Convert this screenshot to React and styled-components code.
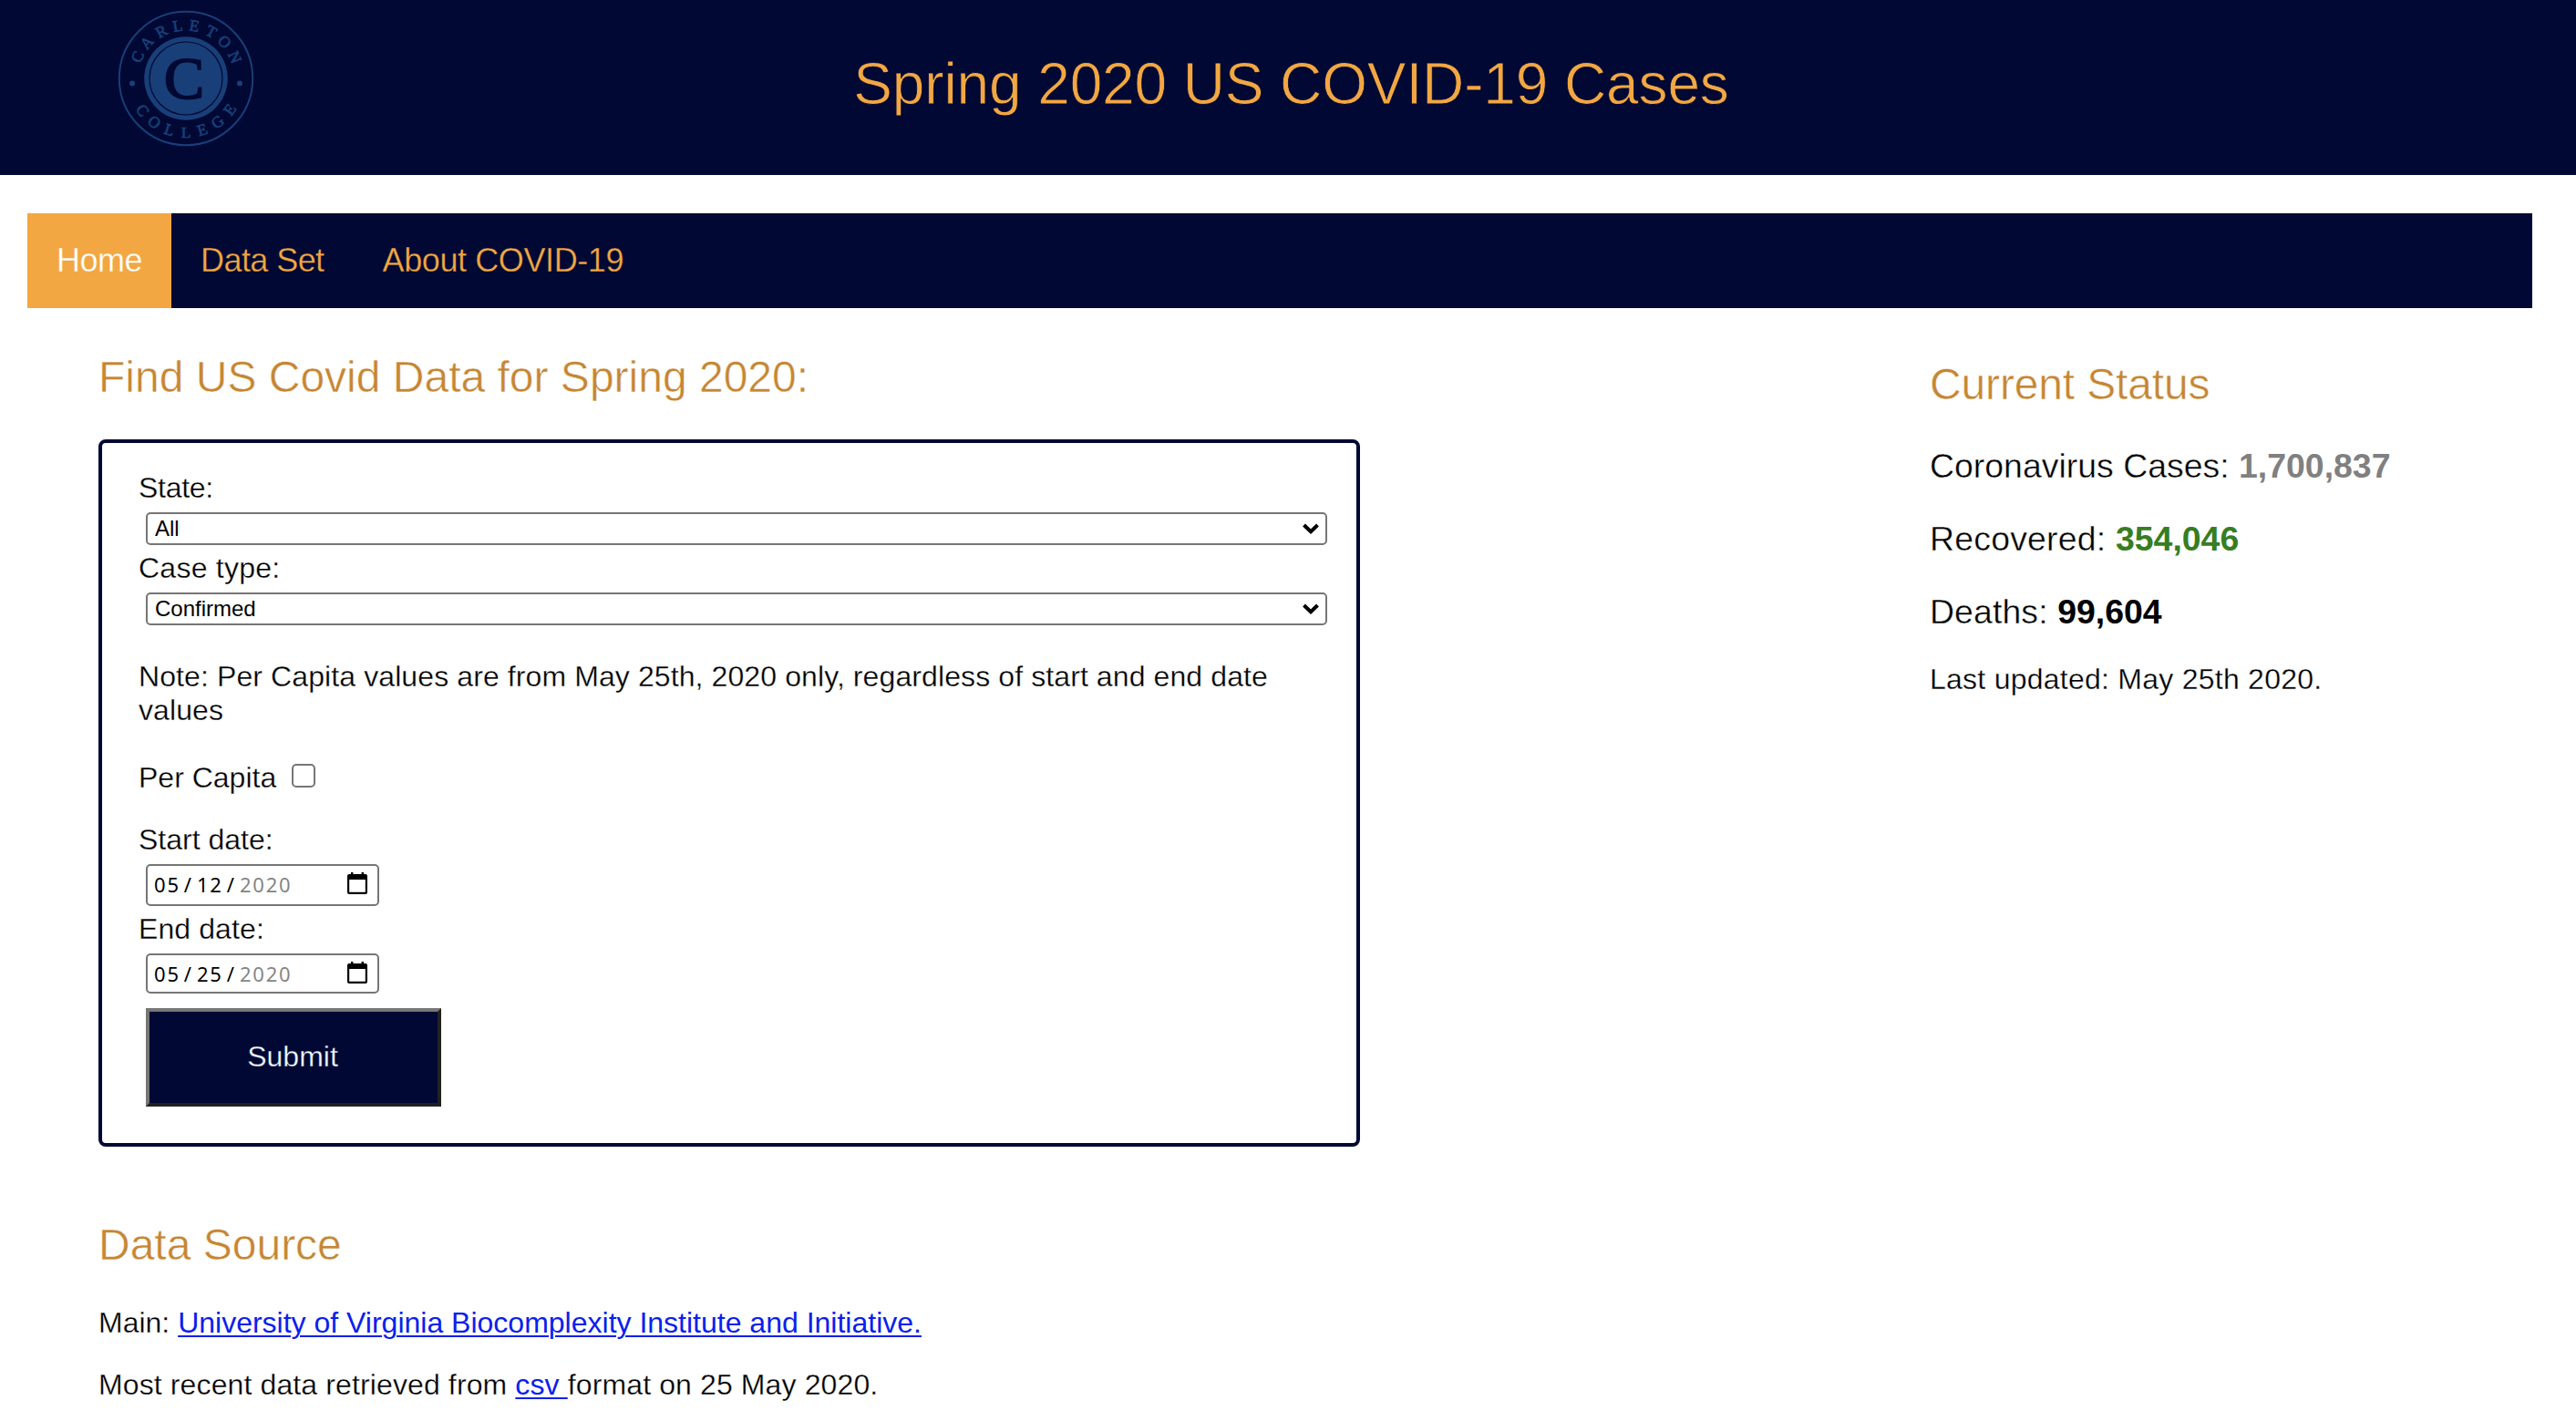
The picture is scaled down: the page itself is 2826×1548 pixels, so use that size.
import React from "react";
import styled, { createGlobalStyle, css } from "styled-components";

const navy = "#000833";
const orange = "#f2a742";
const sans = `"Liberation Sans", Arial, Helvetica, sans-serif`;

/* Slims the regular weight down to a light one on a flat background. */
const light = (background, amount = 0.3) => css`
  -webkit-text-stroke: ${amount}px ${background};
`;

const GlobalStyle = createGlobalStyle`
  *, *::before, *::after { box-sizing: border-box; }
  html, body { margin: 0; padding: 0; background: #fff; }
  body { font-family: ${sans}; color: #000; overflow: hidden; }
`;

const Page = styled.div`
  height: 1548px;
  overflow: hidden;
  display: flex;
  flex-direction: column;
`;

const Header = styled.header`
  height: 192px;
  flex: none;
  background: ${navy};
  display: grid;
  grid-template-columns: 408px 1fr 401px;
`;

const LogoSvg = styled.svg`
  width: 152px;
  height: 152px;
  margin: 10px 0 0 128px;
  font-family: "Liberation Serif", "Times New Roman", serif;
`;

const Title = styled.h1`
  margin: 0;
  padding-top: 52px;
  text-align: center;
  font-size: 64px;
  line-height: 80px;
  font-weight: 400;
  letter-spacing: -0.12px;
  color: ${orange};
  ${light(navy, 0.8)}
`;

const Nav = styled.nav`
  display: flex;
  flex: none;
  height: 104px;
  margin: 42px 48px 0 30px;
  background: ${navy};
`;

const NavItem = styled.a`
  padding: 0 32px;
  font-size: 36px;
  line-height: 103px;
  letter-spacing: ${(p) => p.$spacing}px;
  text-decoration: none;
  color: ${(p) => (p.$active ? "#fff" : orange)};
  background: ${(p) => (p.$active ? orange : navy)};
  ${(p) => light(p.$active ? orange : navy)}
`;

const Columns = styled.main`
  display: grid;
  grid-template-columns: 1384px 1fr;
  column-gap: 625px;
  padding-left: 108px;
`;

const Heading = styled.h2`
  margin: 0;
  font-size: 48px;
  line-height: 57px;
  font-weight: 400;
  letter-spacing: ${(p) => p.$spacing || 0}px;
  color: #c68633;
  ${light("#fff", 0.5)}
`;

const Search = styled.section`
  padding-top: 47px;
`;

const Form = styled.form`
  display: flex;
  flex-direction: column;
  align-items: flex-start;
  height: 776px;
  margin-top: 40px;
  padding: 31px 32px 0 40px;
  border: 4px solid ${navy};
  border-radius: 8px;
`;

const Label = styled.label`
  font-size: 32px;
  line-height: 36px;
  margin-top: ${(p) => p.$top || 0}px;
  letter-spacing: ${(p) => p.$spacing || 0}px;
  ${light("#fff")}
`;

const Note = styled.p`
  margin: 31px 0 0;
  font-size: 32px;
  line-height: 36.5px;
  letter-spacing: 0.1px;
  ${light("#fff")}
`;

const SelectBox = styled.div`
  align-self: stretch;
  display: grid;
  align-items: center;
  height: 36px;
  margin: 9px 0 7px 8px;

  > * { grid-area: 1 / 1; }
`;

const Select = styled.select`
  appearance: none;
  width: 100%;
  height: 36px;
  padding: 0 8px;
  border: 2px solid #767676;
  border-radius: 5px;
  background: #fff;
  color: #000;
  font: 24px/32px ${sans};
`;

const Chevron = styled.svg`
  justify-self: end;
  width: 20px;
  height: 14px;
  margin-right: 8px;
  pointer-events: none;
`;

const CheckRow = styled.div`
  display: flex;
  align-items: flex-start;
  margin-top: 38px;
`;

const Checkbox = styled.input`
  appearance: none;
  width: 26px;
  height: 26px;
  margin: 3px 0 0 17px;
  border: 2px solid #767676;
  border-radius: 5px;
  background: #fff;
`;

const DateBox = styled.div`
  display: flex;
  align-items: flex-start;
  width: 256px;
  height: ${(p) => p.$height}px;
  margin: 9px 0 7px 8px;
  padding: 0 11px 0 7px;
  border: 2px solid #767676;
  border-radius: 5px;
  font: 22px/40px "Noto Sans", sans-serif;
  letter-spacing: 1.8px;
`;

const DatePart = styled.span`
  color: ${(p) => (p.$muted ? "#858585" : "#000")};
`;

const DateSlash = styled.span`
  width: 18.2px;
  padding-left: 4px;
`;

const CalendarSvg = styled.svg`
  width: 22px;
  height: 24px;
  margin: 7px 0 0 auto;
`;

const Submit = styled.button`
  width: 324px;
  height: 108px;
  margin: 9px 0 0 8px;
  padding: 0 2px 2px 0;
  border: 4px solid;
  border-color: #767676 #212121 #212121 #767676;
  border-radius: 0;
  background: ${navy};
  color: aliceblue;
  font: 32px ${sans};
  ${light(navy)}
`;

const Source = styled.section`
  padding-top: 79px;
`;

const Text = styled.p`
  margin: ${(p) => p.$top}px 0 0;
  font-size: 32px;
  line-height: 36px;
  letter-spacing: ${(p) => p.$spacing || 0}px;
  white-space: pre;
  ${light("#fff")}
`;

const Link = styled.a`
  color: #0a20ee;
  text-decoration: underline;
  text-decoration-thickness: 2px;
  text-underline-offset: 3px;
  -webkit-text-stroke: 0;
`;

const Status = styled.aside`
  padding-top: 55px;
`;

const Stat = styled.h3`
  margin: ${(p) => p.$top}px 0 0;
  font-size: 37.44px;
  line-height: 42px;
  font-weight: 400;
  letter-spacing: ${(p) => p.$spacing || 0}px;
  white-space: pre;
  ${light("#fff", 0.4)}
`;

const Count = styled.span`
  font-weight: 700;
  letter-spacing: 0;
  color: ${(p) => p.$color};
  -webkit-text-stroke: 0;
`;

const topLetters = [
  ["C", -66], ["A", -47.6], ["R", -27.5], ["L", -9], ["E", 9], ["T", 28.4], ["O", 46.4], ["N", 66.5],
];
const bottomLetters = [
  ["C", 53.6], ["O", 36], ["L", 17.8], ["L", 0], ["E", -17.5], ["G", -36], ["E", -54.5],
];

function Logo() {
  const blue = "#183f78";
  return (
    <LogoSvg viewBox="-76 -76 152 152" fill={blue}>
      <circle r="73.2" fill="none" stroke={blue} strokeWidth="2" />
      <circle r="45.8" />
      <circle r="40" fill="none" stroke={navy} strokeWidth="1.2" />
      <circle cx="-59" cy="5.5" r="3" />
      <circle cx="59" cy="5.5" r="3" />
      <text x="-2" y="22" textAnchor="middle" fontSize="66" fill={navy} stroke={navy} strokeWidth="2">C</text>
      {topLetters.map(([letter, angle]) => (
        <text key={angle} y="-52.5" textAnchor="middle" fontSize="17.5" stroke={blue} strokeWidth="0.7" transform={`rotate(${angle})`}>
          {letter}
        </text>
      ))}
      {bottomLetters.map(([letter, angle]) => (
        <text key={angle} y="65" textAnchor="middle" fontSize="17.5" stroke={blue} strokeWidth="0.7" transform={`rotate(${angle})`}>
          {letter}
        </text>
      ))}
    </LogoSvg>
  );
}

function SelectField({ value }) {
  return (
    <SelectBox>
      <Select defaultValue={value}>
        <option>{value}</option>
      </Select>
      <Chevron viewBox="0 0 20 14">
        <path d="M2.5 3 L10 10.3 L17.5 3" fill="none" stroke="#000" strokeWidth="4" />
      </Chevron>
    </SelectBox>
  );
}

function DateField({ month, day, year, height }) {
  return (
    <DateBox $height={height}>
      <DatePart>{month}</DatePart>
      <DateSlash>/</DateSlash>
      <DatePart>{day}</DatePart>
      <DateSlash>/</DateSlash>
      <DatePart $muted>{year}</DatePart>
      <CalendarSvg viewBox="0 0 22 24">
        <path d="M4 0h2.4v2h9.2V0H18v2h2a2 2 0 0 1 2 2v18a2 2 0 0 1-2 2H2a2 2 0 0 1-2-2V4a2 2 0 0 1 2-2h2zM2.2 8v13.8h17.6V8z" fillRule="evenodd" />
      </CalendarSvg>
    </DateBox>
  );
}

export default function App() {
  return (
    <Page>
      <GlobalStyle />
      <Header>
        <Logo />
        <Title>Spring 2020 US COVID-19 Cases</Title>
      </Header>
      <Nav>
        <NavItem $active $spacing={-0.5}>Home</NavItem>
        <NavItem $spacing={-0.57}>Data Set</NavItem>
        <NavItem $spacing={-0.4}>About COVID-19</NavItem>
      </Nav>
      <Columns>
        <div>
          <Search>
            <Heading>Find US Covid Data for Spring 2020:</Heading>
            <Form onSubmit={(e) => e.preventDefault()}>
              <Label $spacing={-0.3}>State:</Label>
              <SelectField value="All" />
              <Label $spacing={0.25}>Case type:</Label>
              <SelectField value="Confirmed" />
              <Note>Note: Per Capita values are from May 25th, 2020 only, regardless of start and end date values</Note>
              <CheckRow>
                <Label>Per Capita</Label>
                <Checkbox type="checkbox" />
              </CheckRow>
              <Label $top={32}>Start date:</Label>
              <DateField month="05" day="12" year="2020" height={46} />
              <Label $spacing={0.1}>End date:</Label>
              <DateField month="05" day="25" year="2020" height={44} />
              <Submit type="submit">Submit</Submit>
            </Form>
          </Search>
          <Source>
            <Heading>Data Source</Heading>
            <Text $top={39}>
              {"Main: "}
              <Link>University of Virginia Biocomplexity Institute and Initiative.</Link>
            </Text>
            <Text $top={32} $spacing={0.12}>
              {"Most recent data retrieved from "}
              <Link>{"csv "}</Link>
              format on 25 May 2020.
            </Text>
          </Source>
        </div>
        <Status>
          <Heading $spacing={-0.15}>Current Status</Heading>
          <Stat $top={40}>{"Coronavirus Cases: "}<Count $color="#808080">1,700,837</Count></Stat>
          <Stat $top={38} $spacing={0.2}>{"Recovered: "}<Count $color="#377d22">354,046</Count></Stat>
          <Stat $top={38} $spacing={0.1}>{"Deaths: "}<Count $color="#000">99,604</Count></Stat>
          <Text $top={35} $spacing={0.25}>Last updated: May 25th 2020.</Text>
        </Status>
      </Columns>
    </Page>
  );
}
